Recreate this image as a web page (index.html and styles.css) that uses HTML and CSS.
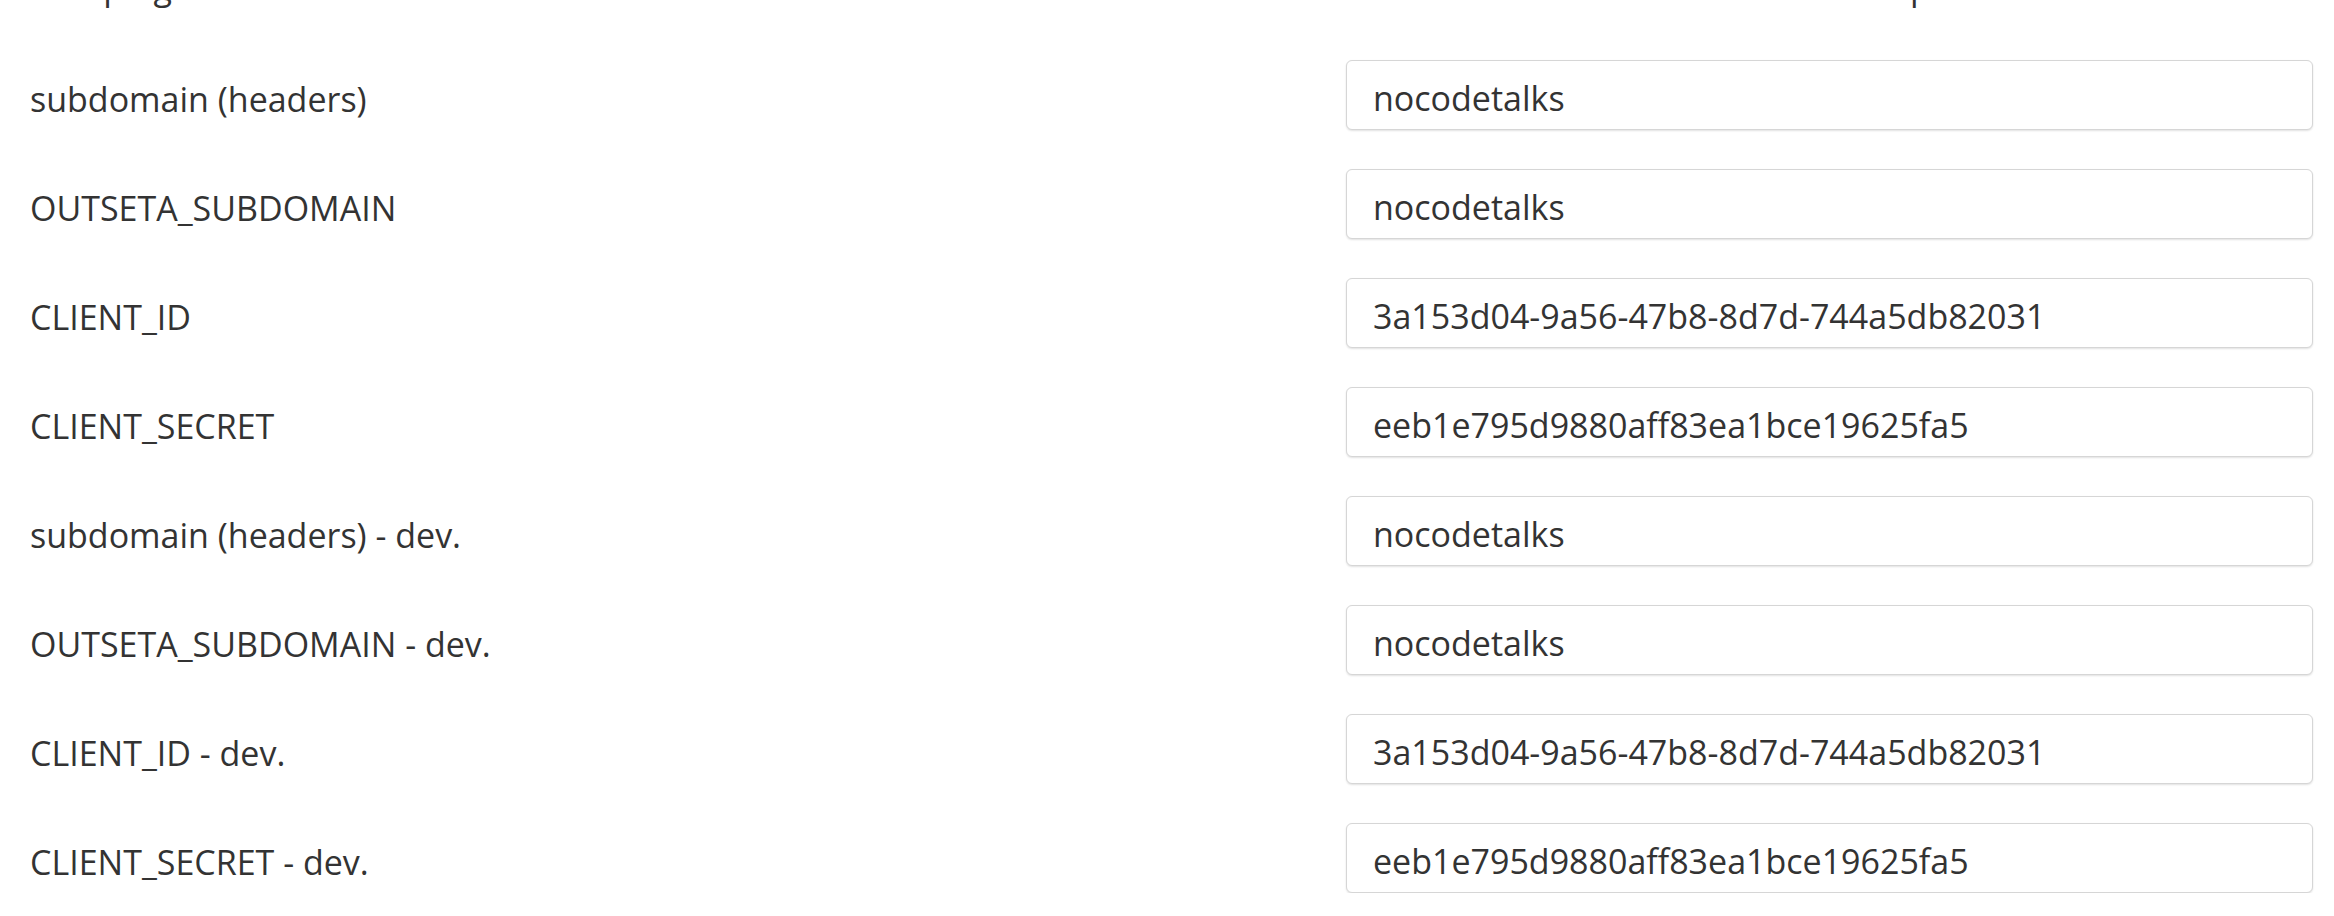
FILE: index.html
```html
<!DOCTYPE html>
<html lang="en">
<head>
<meta charset="utf-8">
<title>Plugin settings</title>
<link rel="stylesheet" href="styles.css">
</head>
<body>
<div class="page">
  <div class="intro-clip"><p class="intro">This plugin needs the data below to connect the Outseta account with this Bubble site and then the admin should set up Outseta</p></div>
  <div class="form">
    <div class="row"><label class="label">subdomain (headers)</label><input class="field" type="text" value="nocodetalks"></div>
    <div class="row"><label class="label">OUTSETA_SUBDOMAIN</label><input class="field" type="text" value="nocodetalks"></div>
    <div class="row"><label class="label">CLIENT_ID</label><input class="field" type="text" value="3a153d04-9a56-47b8-8d7d-744a5db82031"></div>
    <div class="row"><label class="label">CLIENT_SECRET</label><input class="field" type="text" value="eeb1e795d9880aff83ea1bce19625fa5"></div>
    <div class="row"><label class="label">subdomain (headers) - dev.</label><input class="field" type="text" value="nocodetalks"></div>
    <div class="row"><label class="label">OUTSETA_SUBDOMAIN - dev.</label><input class="field" type="text" value="nocodetalks"></div>
    <div class="row"><label class="label">CLIENT_ID - dev.</label><input class="field" type="text" value="3a153d04-9a56-47b8-8d7d-744a5db82031"></div>
    <div class="row"><label class="label">CLIENT_SECRET - dev.</label><input class="field" type="text" value="eeb1e795d9880aff83ea1bce19625fa5"></div>
  </div>
</div>
</body>
</html>
```

FILE: styles.css
```css
html, body {
  margin: 0;
  padding: 0;
  background: #ffffff;
}

body {
  font-family: "Open Sans", "Noto Sans", "DejaVu Sans", sans-serif;
  color: #333333;
  font-size: 34px;
  overflow: hidden;
}

.page {
  padding: 0 21px 0 30px;
}

.intro-clip {
  height: 9px;
  overflow: hidden;
}

.intro {
  margin: 0;
  line-height: 46px;
  margin-top: -36px;
  white-space: nowrap;
}

.form {
  display: flex;
  flex-direction: column;
  gap: 39px;
  margin-top: 51px;
}

.row {
  display: flex;
  align-items: center;
  justify-content: space-between;
  height: 70px;
}

.label {
  font-size: 34px;
  color: #333333;
  padding-top: 7px;
}

.field {
  box-sizing: border-box;
  width: 967px;
  height: 70px;
  padding: 5px 26px 0;
  border: 1px solid #d6d6d6;
  border-radius: 6px;
  box-shadow: 0 1px 2px rgba(0, 0, 0, 0.12);
  background: #ffffff;
  font-family: "Open Sans", "Noto Sans", "DejaVu Sans", sans-serif;
  font-size: 34px;
  color: #333333;
  outline: none;
}
```
